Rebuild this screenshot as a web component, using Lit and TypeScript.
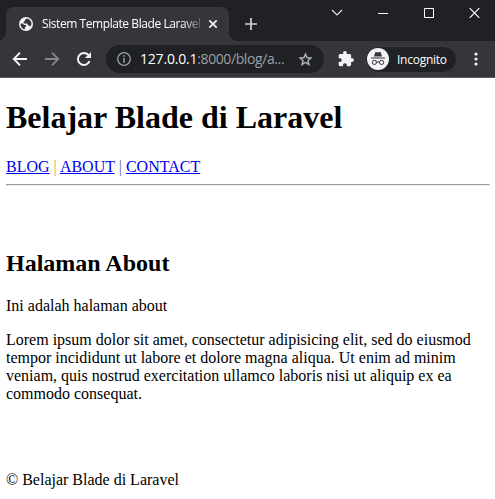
import { LitElement, html, css } from "lit";
import { customElement } from "lit/decorators.js";

@customElement("browser-chrome")
class BrowserChrome extends LitElement {
  static styles = css`
    :host { display: block; height: 78px; box-sizing: border-box; background: #35363a; border-bottom: 1px solid #5a5b5e; font-family: "Open Sans", "Noto Sans", sans-serif; color: #fff; }
    svg { display: block; flex: none; }
    .strip { display: flex; height: 41px; background: #202124; }
    .tab { display: flex; align-items: center; box-sizing: border-box; width: 223px; height: 34px; margin: 7px 0 0 6px; padding-left: 13px; border-radius: 8px 8px 0 0; background: #35363a; position: relative; }
    .tab::before, .tab::after { content: ""; position: absolute; bottom: 0; width: 8px; height: 8px; }
    .tab::before { left: -8px; background: radial-gradient(circle at 0 0, transparent 7.5px, #35363a 8px); }
    .tab::after { right: -8px; background: radial-gradient(circle at 100% 0, transparent 7.5px, #35363a 8px); }
    .title { width: 159px; margin-left: 9px; white-space: nowrap; font-size: 12px; line-height: 18px; letter-spacing: -0.43px; -webkit-mask-image: linear-gradient(90deg, #000 140px, transparent 163px); }
    .close { margin-left: 7px; }
    .plus { margin: 18px 0 0 16px; }
    .down { margin: 9px 0 0 74px; }
    .min { margin: 12px 0 0 35px; }
    .max { margin: 8px 0 0 36px; }
    .exit { margin: 8px 0 0 35px; }
    .bar { display: flex; align-items: center; height: 36px; }
    .back { margin-left: 12px; }
    .forward, .reload { margin-left: 16px; }
    .address { display: flex; align-items: center; box-sizing: border-box; width: 218px; height: 28px; margin-left: 14px; padding-left: 11px; border-radius: 14px; background: #202124; }
    .url { width: 145px; margin-left: 9px; font-size: 14px; line-height: 20px; letter-spacing: -0.4px; white-space: nowrap; color: #9aa0a6; }
    .host { color: #fff; letter-spacing: -0.2px; }
    .star { margin-left: 13px; }
    .ext { margin-left: 14px; }
    .profile { display: flex; align-items: center; box-sizing: border-box; width: 92px; height: 27px; margin-left: 11px; padding-left: 1px; border: 1px solid #3b3c40; border-radius: 14px; background: #202124; font-size: 12px; }
    .profile span { margin-left: 8px; font-weight: 500; letter-spacing: -0.25px; }
    .dots { margin-left: 17px; }
  `;

  render() {
    return html`
      <div class="strip">
        <div class="tab">
          <svg width="14" height="14" viewBox="0 0 14 14"><circle cx="7" cy="7" r="7" fill="#f1f3f4" /><path d="M7.600 1.600 5.800 3.200v1.100L4.600 5v1.500h3.300l1 1v1h1.200l1 1c.8-.7 1.300-1.600 1.400-2.700C12.500 4 10.400 1.800 7.600 1.600M1.500 6.400h1.800l2 1.700H7v1.500l-1.200.8v2C3.100 11.800 1.300 9.300 1.500 6.400" fill="#35363a" /></svg>
          <span class="title">Sistem Template Blade Laravel</span>
          <svg class="close" width="10" height="10" viewBox="0 0 10 10"><path d="m1.300 1.300 7.400 7.400m0-7.400-7.400 7.400" stroke="#f1f3f4" stroke-width="1.700" /></svg>
        </div>
        <svg class="plus" width="12" height="12" viewBox="0 0 12 12"><path d="M6 0v12M0 6h12" stroke="#d0d2d5" stroke-width="1.700" /></svg>
        <svg class="down" width="12" height="8" viewBox="0 0 12 8"><path d="m1 1 5 5 5-5" stroke="#e8eaed" fill="none" stroke-width="1.100" /></svg>
        <svg class="min" width="10" height="3" viewBox="0 0 10 3"><path d="M0 1.500h10" stroke="#fff" /></svg>
        <svg class="max" width="10" height="10" viewBox="0 0 10 10"><path d="M.5.5h9v9h-9z" stroke="#fff" fill="none" /></svg>
        <svg class="exit" width="11" height="10" viewBox="0 0 11 10"><path d="m.7.2 9.600 9.600m0-9.600L.7 9.800" stroke="#fff" stroke-width="1.200" /></svg>
      </div>
      <div class="bar">
        <svg class="back" width="16" height="16" viewBox="0 0 16 16"><path d="M15 8H2M8 1.700 1.800 8 8 14.300" fill="none" stroke="#f1f3f4" stroke-width="1.900" /></svg>
        <svg class="forward" width="16" height="16" viewBox="0 0 16 16"><path d="M1 8h13M8 1.700 14.200 8 8 14.300" fill="none" stroke="#85868a" stroke-width="1.900" /></svg>
        <svg class="reload" width="16" height="16" viewBox="0 0 16 16"><path d="M13.500 10.200A6 6 0 1 1 12.300 3.900L14 5.600" fill="none" stroke="#f1f3f4" stroke-width="2" /><path d="M15 1v6H9z" fill="#f1f3f4" /></svg>
        <div class="address">
          <svg width="14" height="14" viewBox="0 0 14 14"><circle cx="7" cy="7" r="6.300" fill="none" stroke="#9aa0a6" stroke-width="1.300" /><path d="M7 3.300v1.500M7 6v4.800" stroke="#9aa0a6" stroke-width="1.500" /></svg>
          <span class="url"><span class="host">127.0.0.1</span>:8000/blog/a...</span>
          <svg class="star" width="15" height="15" viewBox="1 1 22 22"><path d="m22 9.240-7.190-.62L12 2 9.190 8.630 2 9.240l5.460 4.730L5.820 21 12 17.270 18.180 21l-1.630-7.030zM12 15.400l-3.760 2.270 1-4.280-3.320-2.880 4.380-.38L12 6.100l1.710 4.040 4.380.38-3.320 2.880 1 4.280z" fill="#bdc1c6" stroke="#bdc1c6" stroke-width=".4" /></svg>
        </div>
        <svg class="ext" width="16" height="16" viewBox="1 1 22 22"><path d="M20.500 11H19V7c0-1.100-.9-2-2-2h-4V3.500a2.500 2.500 0 0 0-5 0V5H4c-1.100 0-1.990.9-1.990 2v3.800H3.500a2.700 2.700 0 0 1 0 5.400H2V20c0 1.100.9 2 2 2h3.800v-1.500a2.700 2.700 0 0 1 5.400 0V22H17c1.100 0 2-.9 2-2v-4h1.500a2.500 2.500 0 0 0 0-5" fill="#f1f3f4" /></svg>
        <div class="profile">
          <svg width="22" height="22" viewBox="0 0 22 22"><circle cx="11" cy="11" r="11" fill="#f1f3f4" /><path d="M7 8.500 8.100 4.700q.3-.9 1.300-.6l1.600.4 1.600-.4q1-.3 1.300.6L15 8.500zM4 9.500h14v1H4z" fill="#35363a" /><circle cx="7.400" cy="14.400" r="2.100" fill="none" stroke="#35363a" /><circle cx="14.600" cy="14.400" r="2.100" fill="none" stroke="#35363a" /><path d="M9.500 14.200q1.500-.8 3 0" fill="none" stroke="#35363a" /></svg>
          <span>Incognito</span>
        </div>
        <svg class="dots" width="4" height="14" viewBox="0 0 4 14"><circle cx="2" cy="2" r="1.600" fill="#f1f3f4" /><circle cx="2" cy="7" r="1.600" fill="#f1f3f4" /><circle cx="2" cy="12" r="1.600" fill="#f1f3f4" /></svg>
      </div>
    `;
  }
}

@customElement("app-root")
class AppRoot extends LitElement {
  static styles = css`
    :host { display: block; height: 499px; overflow: hidden; background: #fff; }
    .page { display: flow-root; margin: 0 5px 0 6px; font: 16px/18px "Liberation Serif", "Times New Roman", serif; color: #000; }
    h1 { margin: 21px 0 22px; font-size: 32px; line-height: 37px; }
    h2 { margin: 20px 0; font-size: 24px; line-height: 27px; }
    p { margin: 16px 0; }
    a { color: #0000ee; text-decoration: underline; }
    .warm { color: #e0a050; }
    .cool { color: #6868a8; }
    hr { margin: 8px 0; border: 1px solid; border-color: #9a9a9a #eee #eee #9a9a9a; }
  `;

  render() {
    return html`
      <browser-chrome></browser-chrome>
      <main class="page">
        <h1>Belajar Blade di Laravel</h1>
        <nav><a href="#blog">BLOG</a> <span class="warm">|</span> <a href="#about">ABOUT</a> <span class="cool">|</span> <a href="#contact">CONTACT</a></nav>
        <hr />
        <br /><br />
        <h2>Halaman About</h2>
        <p>Ini adalah halaman about</p>
        <p>Lorem ipsum dolor sit amet, consectetur adipisicing elit, sed do eiusmod tempor incididunt ut labore et dolore magna aliqua. Ut enim ad minim veniam, quis nostrud exercitation ullamco laboris nisi ut aliquip ex ea commodo consequat.</p>
        <br /><br />
        <p>&copy; Belajar Blade di Laravel</p>
      </main>
    `;
  }
}
